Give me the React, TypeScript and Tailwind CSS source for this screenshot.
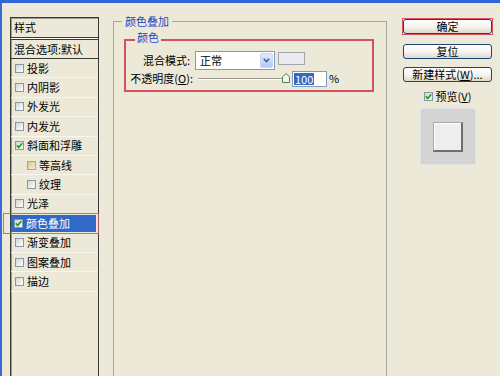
import React from "react";

function Box({ checked, tan }: { checked?: boolean; tan?: boolean }) {
  return (
    <span
      className={
        tan
          ? "flex h-[9px] w-[9px] shrink-0 items-center justify-center border border-[#b7a574] bg-linear-to-br from-[#d9c58c] to-[#f9f1d9]"
          : "flex h-[9px] w-[9px] shrink-0 items-center justify-center border border-[#8796a9] bg-linear-to-br from-[#d4d4ce] to-[#ffffff]"
      }
    >
      {checked && (
        <svg width="7" height="7" viewBox="0 0 7 7">
          <path d="M0.8 3.4 L2.7 5.4 L6.3 1.2" stroke="#21a121" strokeWidth="1.7" fill="none" />
        </svg>
      )}
    </span>
  );
}

type Item = { t: string; c?: boolean; indent?: boolean; tan?: boolean; sel?: boolean };

const items: Item[] = [
  { t: "投影" },
  { t: "内阴影" },
  { t: "外发光" },
  { t: "内发光" },
  { t: "斜面和浮雕", c: true },
  { t: "等高线", indent: true, tan: true },
  { t: "纹理", indent: true },
  { t: "光泽" },
  { t: "颜色叠加", c: true, sel: true },
  { t: "渐变叠加" },
  { t: "图案叠加" },
  { t: "描边" },
];

function Btn({ children }: { children: React.ReactNode }) {
  return (
    <div className="flex h-[15px] w-[89px] items-center justify-center rounded-[3px] border border-[#1d4474] bg-linear-to-b from-[#ffffff] via-[#f6f5f0] to-[#dcd8cc] text-[11px] leading-none text-black">
      {children}
    </div>
  );
}

export default function App() {
  return (
    <div className="flex h-[376px] w-[500px] flex-col overflow-hidden bg-[#ece9d8] font-['Noto_Sans_CJK_SC','Noto_Sans',sans-serif] text-[11px] text-black">
      <div className="h-[3px] w-full shrink-0 bg-[#3164d6]" />
      <div className="flex min-h-0 flex-1">
        <div className="w-[2px] shrink-0 bg-[#3a6ad8]" />

        {/* Left style list */}
        <div className="relative ml-[8px] mt-[14px] flex w-[89px] shrink-0 flex-col border-l border-r border-t border-[#3a3a36] shadow-[inset_1px_1px_0_#9d9b90]">
          <div className="flex h-[19px] items-center pl-[3px] leading-none">样式</div>
          <div className="h-[1px] bg-[#3a3a36]" />
          <div className="h-[1px] bg-[#ffffff]" />
          <div className="h-[1px] bg-[#3a3a36]" />
          <div className="flex h-[18px] items-center pl-[3px] leading-none">混合选项:默认</div>
          <div className="h-[1px] bg-[#3a3a36]" />
          {items.map((it) =>
            it.sel ? (
              <div key={it.t} className="relative h-[19.4px] border-b border-[#f8f6ee] pb-[1px] pr-[2px] pt-[1px]">
                <div className="flex h-full items-center gap-[3px] bg-[#316ac5] pl-[3px] leading-none text-white">
                  <Box checked />
                  <span>{it.t}</span>
                </div>
                <div className="absolute -left-[8px] -right-[1px] -top-[1px] bottom-[-1px] border-[1.5px] border-[#d6505f]/85" />
              </div>
            ) : (
              <div
                key={it.t}
                className={
                  it.indent
                    ? "flex h-[19.4px] items-center gap-[3px] border-b border-[#f8f6ee] pl-[16px] leading-none"
                    : "flex h-[19.4px] items-center gap-[3px] border-b border-[#f8f6ee] pl-[4px] leading-none"
                }
              >
                <Box checked={it.c} tan={it.tan} />
                <span>{it.t}</span>
              </div>
            )
          )}
        </div>

        {/* Center group */}
        <div className="ml-[14px] mt-[12px] flex w-[274px] shrink-0 flex-col">
          <div className="flex h-[12px] items-end">
            <div className="h-[6px] w-[9px] border-l border-t border-[#a8a699]" />
            <span className="px-[3px] leading-[12px] text-[#1d48c4]">颜色叠加</span>
            <div className="h-[6px] flex-1 border-r border-t border-[#a8a699]" />
          </div>
          <div className="flex-1 border-l border-r border-[#a8a699] pt-[4px]">
            <div className="ml-[10px] flex w-[250px] flex-col">
              <div className="flex h-[12px] items-end">
                <div className="h-[4px] w-[11px] border-l-2 border-t-2 border-[#d6505f]" />
                <span className="px-[2px] leading-[12px] text-[#1d48c4]">颜色</span>
                <div className="h-[4px] flex-1 border-r-2 border-t-2 border-[#d6505f]" />
              </div>
              <div className="border-b-2 border-l-2 border-r-2 border-[#d6505f] pb-[3px] pt-[8px]">
                <div className="flex h-[19px] items-center">
                  <span className="w-[64px] text-right leading-none">混合模式:</span>
                  <div className="ml-[5px] flex h-[19px] w-[80px] items-center border border-[#7f9db9] bg-white">
                    <span className="flex-1 pl-[4px] leading-none">正常</span>
                    <div className="mr-[1px] flex h-[15px] w-[13px] items-center justify-center rounded-[2px] border border-[#c6d5fb] bg-linear-to-b from-[#e1eafe] to-[#b2c8f6]">
                      <svg width="7" height="5" viewBox="0 0 7 5">
                        <path d="M0.8 0.8 L3.5 3.6 L6.2 0.8" stroke="#4d6185" strokeWidth="1.6" fill="none" />
                      </svg>
                    </div>
                  </div>
                  <div className="ml-[3px] mt-[1px] h-[13px] w-[27px] self-start border border-[#a3a3a8] bg-[#eaeaef]" />
                </div>
                <div className="flex h-[17px] items-center">
                  <span className="w-[67px] text-right leading-none">
                    不透明度(<span className="underline">O</span>):
                  </span>
                  <div className="ml-[5px] flex w-[92px] items-center">
                    <div className="h-[2px] w-[85px] border-b border-t border-b-white border-t-[#9c9a8e]" />
                    <svg width="8" height="10" viewBox="0 0 8 10" className="-ml-[1px] -mt-[1px]">
                      <path d="M0.5 9.5 V3.8 L4 0.6 L7.5 3.8 V9.5 Z" fill="#f3f3ec" stroke="#5d7c5d" strokeWidth="1" />
                    </svg>
                  </div>
                  <div className="ml-[2px] flex h-[16px] w-[35px] items-center border border-[#7f9db9] bg-white pl-[1px]">
                    <span className="bg-[#316ac5] px-[1px] leading-[12px] text-white">100</span>
                  </div>
                  <span className="ml-[2px] leading-none">%</span>
                </div>
              </div>
            </div>
          </div>
        </div>

        {/* Right column */}
        <div className="ml-[15px] mt-[15px] flex w-[91px] shrink-0 flex-col items-center">
          <div className="border border-[#d6505f]">
            <Btn>确定</Btn>
          </div>
          <div className="mt-[9px]">
            <Btn>复位</Btn>
          </div>
          <div className="mt-[8px]">
            <Btn>
              新建样式(<span className="underline">W</span>)...
            </Btn>
          </div>
          <div className="mt-[8px] flex h-[12px] items-center gap-[3px]">
            <Box checked />
            <span className="leading-none">
              预览(<span className="underline">V</span>)
            </span>
          </div>
          <div className="mt-[6px] flex h-[57px] w-[56px] items-center justify-center border border-[#e2e2e2] bg-[#d4d4d4]">
            <div className="h-[30px] w-[30px] border-b-2 border-l border-r-2 border-t border-b-[#6f6f6f] border-l-[#a9a9a9] border-r-[#6f6f6f] border-t-[#a9a9a9] bg-[#eeeeee] shadow-[inset_1px_1px_0_#ffffff]" />
          </div>
        </div>
      </div>
    </div>
  );
}
